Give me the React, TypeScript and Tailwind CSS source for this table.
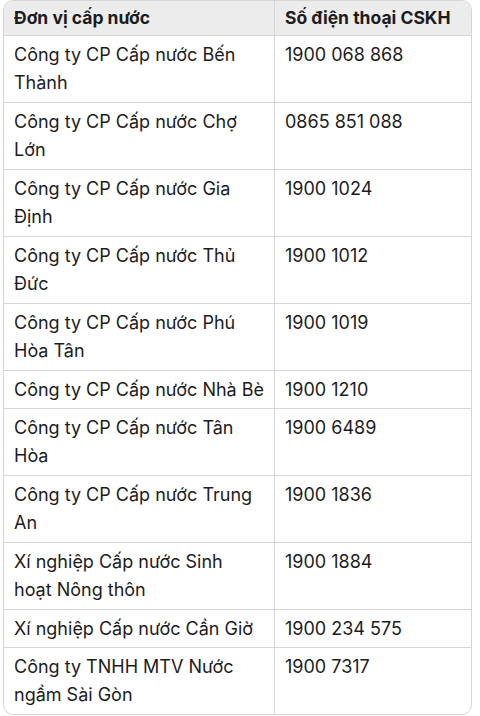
const rows: [string[], string][] = [
  [["Công ty CP Cấp nước Bến", "Thành"], "1900 068 868"],
  [["Công ty CP Cấp nước Chợ", "Lớn"], "0865 851 088"],
  [["Công ty CP Cấp nước Gia", "Định"], "1900 1024"],
  [["Công ty CP Cấp nước Thủ", "Đức"], "1900 1012"],
  [["Công ty CP Cấp nước Phú", "Hòa Tân"], "1900 1019"],
  [["Công ty CP Cấp nước Nhà Bè"], "1900 1210"],
  [["Công ty CP Cấp nước Tân", "Hòa"], "1900 6489"],
  [["Công ty CP Cấp nước Trung", "An"], "1900 1836"],
  [["Xí nghiệp Cấp nước Sinh", "hoạt Nông thôn"], "1900 1884"],
  [["Xí nghiệp Cấp nước Cần Giờ"], "1900 234 575"],
  [["Công ty TNHH MTV Nước", "ngầm Sài Gòn"], "1900 7317"],
];

export default function App() {
  return (
    <div className="h-[716px] w-[480px] overflow-hidden bg-white pl-[3px] font-['Inter',sans-serif] text-[18px] leading-[28px] text-[#1c1c1e]">
      <div className="w-[469px] overflow-hidden rounded-[10px] border border-[#d6d6d6]">
        <div className="grid grid-cols-[271px_1fr] bg-[#ececec] text-[17.5px] font-bold">
          <div className="whitespace-nowrap border-r border-[#d6d6d6] py-[3px] pl-[10px]">Đơn vị cấp nước</div>
          <div className="whitespace-nowrap py-[3px] pl-[10px]">Số điện thoại CSKH</div>
        </div>
        {rows.map(([lines, phone]) => (
          <div
            key={phone}
            className={
              lines.length > 1
                ? "grid grid-cols-[271px_1fr] border-t border-[#d6d6d6] py-[5px]"
                : "grid grid-cols-[271px_1fr] border-t border-[#d6d6d6] pt-[5px] pb-[4px]"
            }
          >
            <div className="-my-[5px] whitespace-nowrap border-r border-[#d6d6d6] py-[5px] pl-[10px]">
              {lines.map((l) => (
                <div key={l}>{l}</div>
              ))}
            </div>
            <div className="whitespace-nowrap pl-[10px]">{phone}</div>
          </div>
        ))}
      </div>
    </div>
  );
}
